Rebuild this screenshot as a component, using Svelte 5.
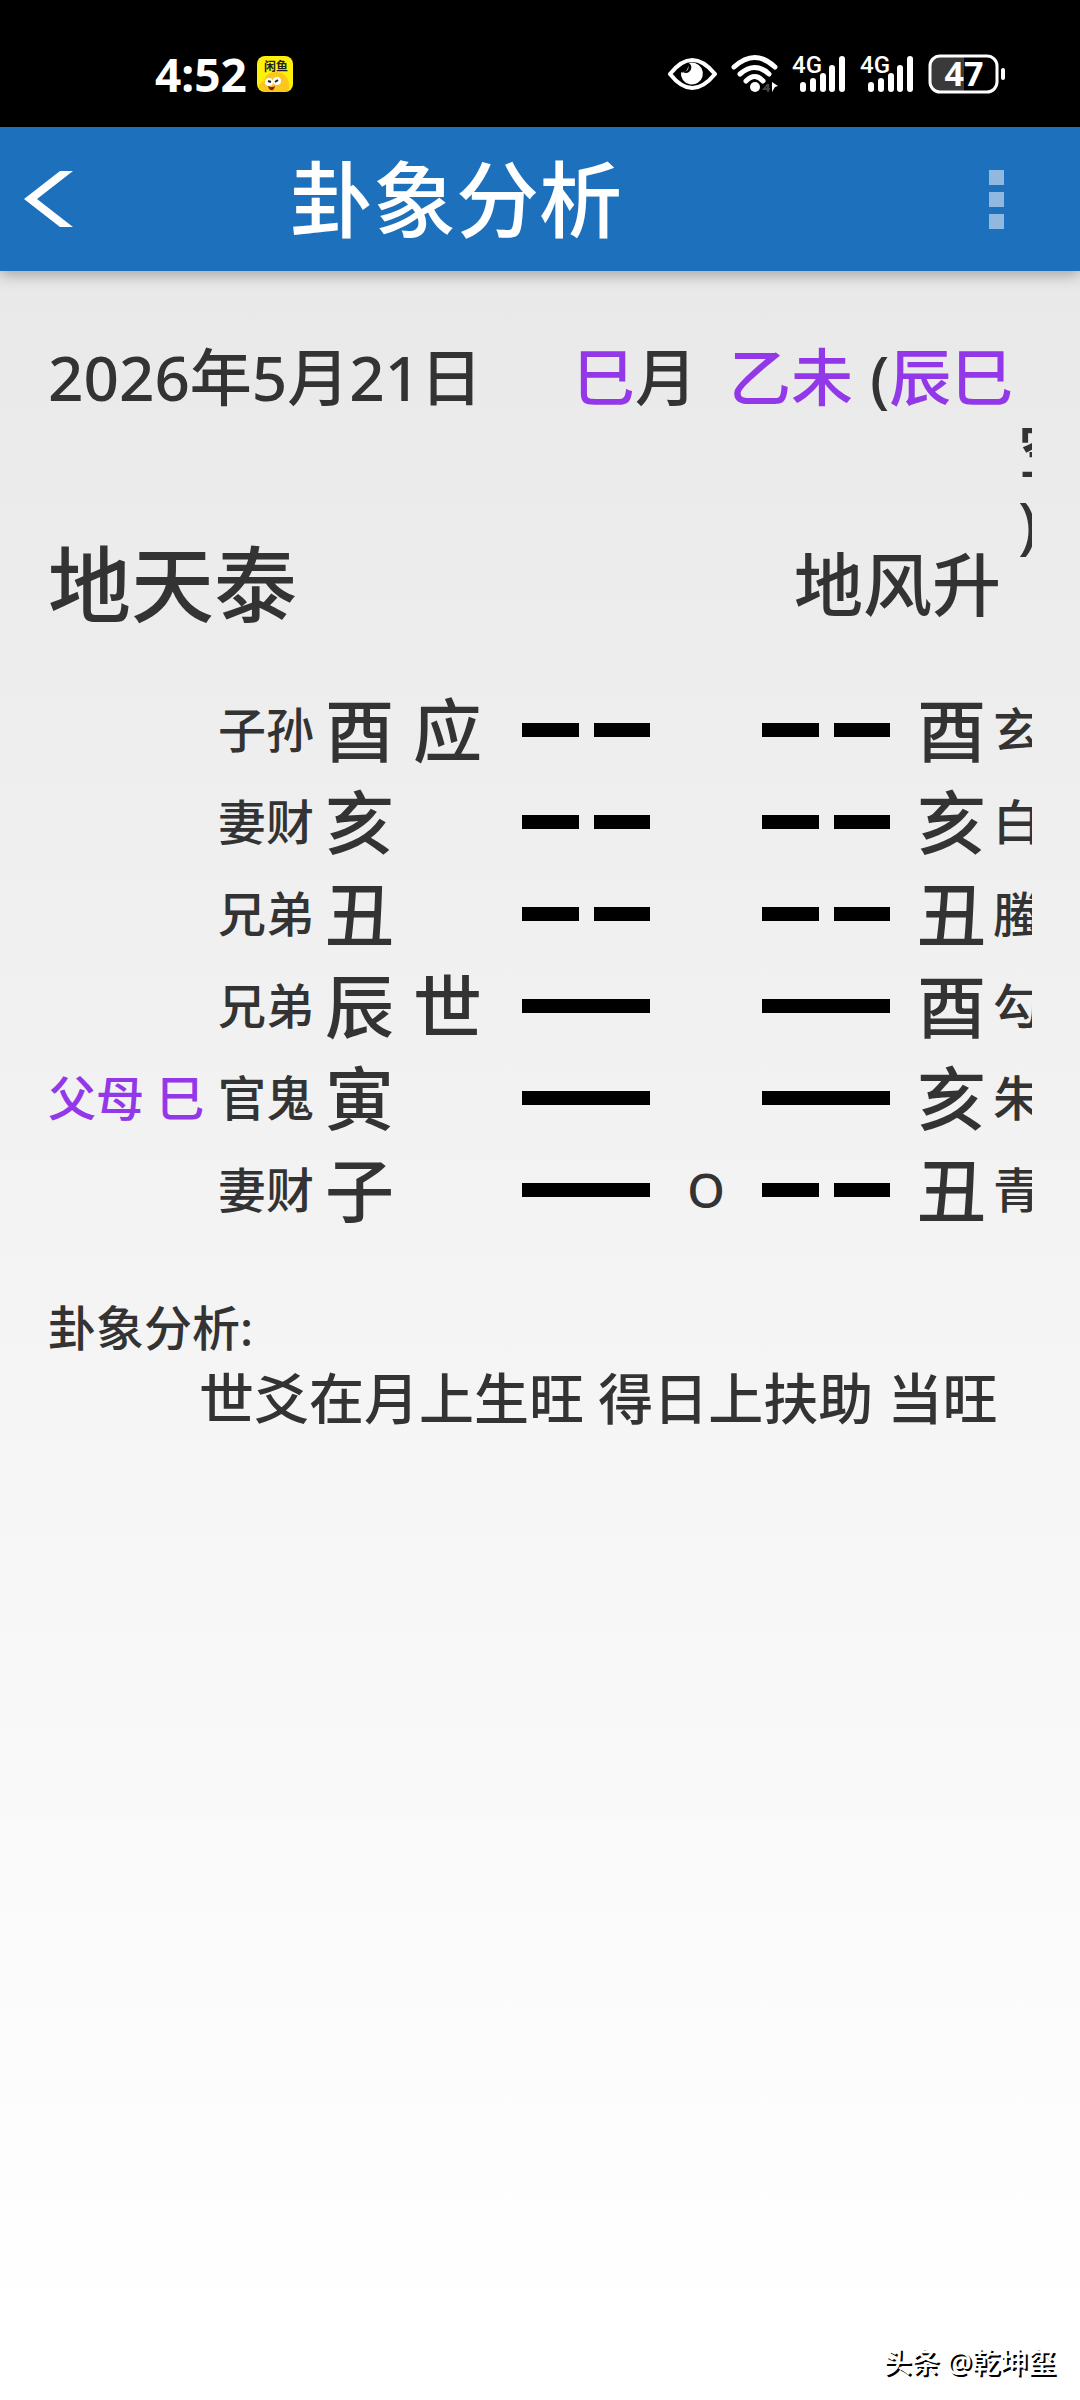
<script>
	const ganzhi = { month: '巳', day: '乙未', empty: '辰巳' };

	// top line first, yang = solid bar
	const lines = [
		{ hidden: '', kin: '子孙', branch: '酉', mark: '应', yang: false, moving: '', toYang: false, toBranch: '酉', spirit: '玄武' },
		{ hidden: '', kin: '妻财', branch: '亥', mark: '', yang: false, moving: '', toYang: false, toBranch: '亥', spirit: '白虎' },
		{ hidden: '', kin: '兄弟', branch: '丑', mark: '', yang: false, moving: '', toYang: false, toBranch: '丑', spirit: '螣蛇' },
		{ hidden: '', kin: '兄弟', branch: '辰', mark: '世', yang: true, moving: '', toYang: true, toBranch: '酉', spirit: '勾陈' },
		{ hidden: '父母 巳', kin: '官鬼', branch: '寅', mark: '', yang: true, moving: '', toYang: true, toBranch: '亥', spirit: '朱雀' },
		{ hidden: '', kin: '妻财', branch: '子', mark: '', yang: true, moving: 'O', toYang: false, toBranch: '丑', spirit: '青龙' }
	];

	const signalBars = [
		{ x: 8, y: 28 },
		{ x: 18, y: 24 },
		{ x: 28, y: 19 },
		{ x: 37, y: 11 },
		{ x: 47, y: 2 }
	];
</script>

{#snippet yao(solid)}
	<div class="yao">
		<span></span>
		{#if !solid}<span></span>{/if}
	</div>
{/snippet}

{#snippet signal()}
	<svg width="56" height="40" viewBox="0 0 56 40">
		<text class="net" x="0" y="19">4G</text>
		{#each signalBars as bar}
			<rect x={bar.x} y={bar.y} width="6" height={38 - bar.y} rx="3" fill="#fff" />
		{/each}
	</svg>
{/snippet}

<div class="screen">
	<div class="status">
		<span class="clock">4:52</span>
		<svg class="app-icon" width="36" height="36" viewBox="0 0 36 36">
			<rect width="36" height="36" rx="8" fill="#fdf00b" />
			<path d="M2 32c0-4 2-6 5-7 1-6 6-9 12-9 8 0 13 6 13 13v5l-4 2H8z" fill="#fcc71c" />
			<circle cx="12" cy="26" r="4" fill="#fff" />
			<circle cx="20" cy="25" r="4" fill="#fff" />
			<path d="M11 25l3 1M18 26l3-2" stroke="#222" stroke-width="2" />
			<path d="M11 30q4 2 7 0q-1 5-4 4q-2 0-3-4" fill="#8a1c10" />
			<text class="app-name" x="7" y="15">闲鱼</text>
		</svg>

		<div class="indicators">
			<svg width="51" height="40" viewBox="0 0 51 40">
				<path d="M2 20Q24 -8 47 20Q24 48 2 20z" fill="none" stroke="#fff" stroke-width="4" stroke-linejoin="round" />
				<path d="M20 11a6 6 0 0 1-4 7q-2 1-3 0a11 11 0 1 0 14-9q-3-1-6 0q5 4 0 9q-3 2-6 0q7-1 5-7z" fill="#fff" />
			</svg>
			<svg width="49" height="40" viewBox="0 0 49 40">
				<g fill="none" stroke="#fff" stroke-width="5" stroke-linecap="round">
					<path d="M3 13Q24 -6 44 13" />
					<path d="M9 20Q24 7 38 20" />
					<path d="M15 27Q24 18 32 27" />
				</g>
				<circle cx="24" cy="33" r="5" fill="#fff" />
				<path d="M37 30l-4 5h6M37 30v8" fill="none" stroke="#444" stroke-width="2" />
				<path d="M41 28l6 4-3 1-3 5z" fill="#fff" />
			</svg>
			{@render signal()}
			{@render signal()}
			<svg width="80" height="40" viewBox="0 0 80 40">
				<path d="M11 2H36V38H11Q2 38 2 29V11Q2 2 11 2z" fill="#3a3a3a" />
				<rect x="2" y="2" width="67" height="36" rx="10" fill="none" stroke="#fff" stroke-width="3" />
				<path d="M75 16v8" stroke="#fff" stroke-width="4" stroke-linecap="round" />
				<text class="battery" x="36" y="32" text-anchor="middle">47</text>
			</svg>
		</div>
	</div>

	<header>
		<button class="back" aria-label="返回">
			<svg width="49" height="56" viewBox="0 0 49 56">
				<path d="M0 28L36 0H49L13 28L49 56H36z" fill="#fff" />
			</svg>
		</button>
		<h1>卦象分析</h1>
		<button class="menu" aria-label="菜单">
			<i></i><i></i><i></i>
		</button>
	</header>

	<main>
		<div class="date">
			<span>2026年5月21日</span>
			<span><b>{ganzhi.month}</b>月</span>
			<span><b>{ganzhi.day}</b></span>
			<span>(<b>{ganzhi.empty}</b></span>
			<span class="rest"><br />空<br />)</span>
		</div>

		<div class="names">
			<h2>地天泰</h2>
			<h3>地风升</h3>
		</div>

		<table>
			<colgroup>
				<col class="c-hidden" />
				<col class="c-kin" />
				<col class="c-branch" />
				<col class="c-mark" />
				<col class="c-yao" />
				<col class="c-moving" />
				<col class="c-yao" />
				<col class="c-to" />
				<col />
			</colgroup>
			<tbody>
				{#each lines as line}
					<tr>
						<td class="hidden">{line.hidden}</td>
						<td>{line.kin}</td>
						<td class="big">{line.branch}</td>
						<td class="big">{line.mark}</td>
						<td>{@render yao(line.yang)}</td>
						<td class="moving">{line.moving}</td>
						<td>{@render yao(line.toYang)}</td>
						<td class="big to">{line.toBranch}</td>
						<td>{line.spirit}</td>
					</tr>
				{/each}
			</tbody>
		</table>

		<section>
			<h4>卦象分析:</h4>
			<p>世爻在月上生旺 得日上扶助 当旺</p>
		</section>

		<footer>头条 @乾坤玺</footer>
	</main>
</div>

<style>
	:global(body) {
		margin: 0;
	}
	.screen {
		display: flex;
		flex-direction: column;
		min-height: 100vh;
		font-family: 'Noto Sans', 'Noto Sans CJK SC', sans-serif;
		font-weight: 500;
		color: #333;
	}
	h1,
	h2,
	h3,
	h4,
	p {
		margin: 0;
		font-weight: 500;
	}
	svg {
		display: block;
	}

	.status {
		display: flex;
		align-items: center;
		box-sizing: border-box;
		height: 127px;
		padding: 20px 72px 0 155px;
		background: #000;
		color: #fff;
	}
	.clock {
		font-size: 46px;
		line-height: 46px;
		font-weight: 700;
	}
	.app-icon {
		margin-left: 10px;
	}
	.app-name {
		font-size: 12px;
		font-weight: 700;
		fill: #222;
	}
	.indicators {
		display: flex;
		gap: 12px;
		margin-left: auto;
	}
	.net {
		font: 500 24px Roboto, sans-serif;
		fill: #fff;
	}
	.battery {
		font: 700 34px 'Noto Sans', sans-serif;
		fill: #fff;
	}

	header {
		position: relative;
		display: flex;
		align-items: center;
		height: 144px;
		padding: 0 76px 0 24px;
		background: #1c70bc;
		color: #fff;
		box-shadow: 0 4px 14px rgba(0, 0, 0, 0.3);
	}
	button {
		padding: 0;
		border: 0;
		background: none;
	}
	h1 {
		margin-left: 217px;
		font-size: 83px;
		line-height: 96px;
	}
	.menu {
		display: grid;
		gap: 7px;
		margin-left: auto;
	}
	.menu i {
		width: 15px;
		height: 15px;
		background: #91b9df;
	}

	main {
		flex: 1;
		display: flex;
		flex-direction: column;
		padding: 70px 48px 0;
		background: linear-gradient(#e9e9e9, #fff 97%);
	}
	.date {
		display: grid;
		grid-template-columns: 525fr 156fr 141fr 148fr 14fr;
		font-size: 62px;
		line-height: 73px;
	}
	.date span {
		min-width: 0;
		white-space: nowrap;
	}
	.date .rest {
		overflow: hidden;
	}
	b,
	.hidden {
		font-weight: 500;
		color: #9338e8;
	}

	.names {
		display: flex;
		align-items: center;
		justify-content: space-between;
		margin-top: -24px;
		padding-right: 31px;
	}
	h2 {
		font-size: 83px;
		line-height: 96px;
	}
	h3 {
		font-size: 69px;
		line-height: 82px;
	}

	table {
		width: 100%;
		margin-top: 52px;
		table-layout: fixed;
		border-collapse: collapse;
		font-size: 48px;
		line-height: 82px;
	}
	tr {
		height: 92px;
	}
	td {
		padding: 0;
		overflow: hidden;
		white-space: nowrap;
		vertical-align: middle;
	}
	.c-hidden {
		width: 170px;
	}
	.c-kin {
		width: 107px;
	}
	.c-branch {
		width: 88px;
	}
	.c-mark {
		width: 109px;
	}
	.c-yao {
		width: 128px;
	}
	.c-moving {
		width: 112px;
	}
	.c-to {
		width: 103px;
	}
	.big {
		font-size: 69px;
	}
	.to {
		padding-left: 27px;
	}
	.moving {
		text-align: center;
	}
	.yao {
		display: flex;
		gap: 15px;
	}
	.yao span {
		flex: 1;
		height: 14px;
		background: #000;
	}

	section {
		margin-top: 57px;
	}
	h4 {
		font-size: 48px;
		line-height: 70px;
	}
	p {
		padding-left: 151px;
		font-size: 55px;
		line-height: 70px;
	}

	footer {
		margin: auto -24px 18px auto;
		font-size: 28px;
		line-height: 40px;
		color: #fff;
		text-shadow: 2px 2px 0 #000;
	}
</style>
